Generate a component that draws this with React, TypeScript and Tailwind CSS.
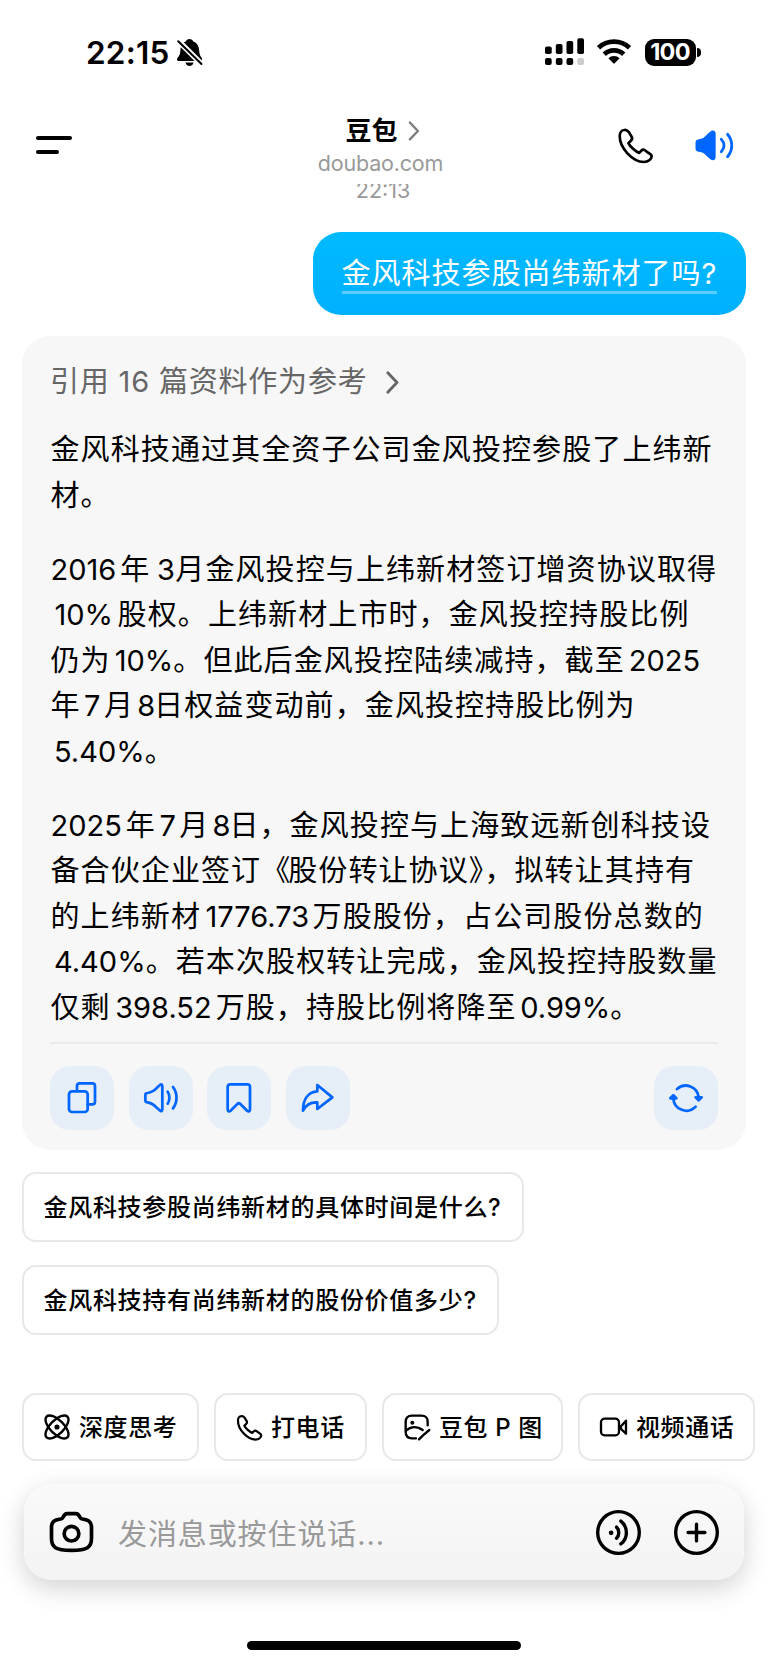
import React from "react";

interface IconProps {
    className?: string;
    strokeWidth?: number;
}

const BellOff = () => (
    <svg width="28" height="29" viewBox="1 1 28 29">
        <path d="M14.500 2c1.900 0 3.300.9 3.700 2.400c3.800 1.300 5.600 4.500 5.900 8.600c.3 4 .9 5.800 2.500 7.700c1 1.200.4 3.300-1.300 3.300H3.700c-1.700 0-2.200-1.900-1.200-3.100c2-2.200 2.600-3.800 2.900-7.900c.3-4.100 1.700-7.300 5.400-8.600C11.300 2.900 12.700 2 14.500 2z" fill="#000" />
        <path d="M10.500 25.500h8c-.4 2.200-1.900 3.600-4 3.600s-3.600-1.400-4-3.600z" fill="#000" />
        <path d="M3 3.500L27 27.500" stroke="#fff" strokeWidth="5.500" />
        <path d="M3.200 4.200L26.500 27" stroke="#000" strokeWidth="2" strokeLinecap="round" />
    </svg>
);

const Signal = () => (
    <svg width="40" height="28" viewBox="0 0 40 28">
        <rect x="0" y="8.500" width="6.700" height="7.500" rx="1.800" />
        <rect x="10.800" y="6" width="6.700" height="10" rx="1.800" />
        <rect x="21.500" y="3" width="6.700" height="13" rx="1.800" />
        <rect x="32.300" y="0.300" width="6.700" height="15.700" rx="1.800" />
        <rect x="0" y="20" width="6.700" height="7" rx="2" />
        <rect x="10.800" y="20" width="6.700" height="7" rx="2" />
        <rect x="21.500" y="20" width="6.700" height="7" rx="2" />
        <rect x="32.300" y="20" width="6.700" height="7" rx="2" fill="#ccc" />
    </svg>
);

const Wifi = () => (
    <svg width="36" height="28" viewBox="0 0 36 28" fill="none" stroke="#000" strokeWidth="4.800">
        <path d="M2.500 9.800A22.600 22.600 0 0 1 33.500 9.800" />
        <path d="M8.300 16.300A14 14 0 0 1 27.700 16.300" />
        <path d="M12.400 20.200A8 8 0 0 1 23.600 20.200L18.700 25.300Q18 26 17.300 25.300Z" fill="#000" stroke="none" />
    </svg>
);

const Phone = ({ className, strokeWidth }: IconProps) => (
    <svg className={className} viewBox="0 0 110 110" fill="none" stroke="currentColor" strokeWidth={strokeWidth} strokeLinejoin="round">
        <path d="M22 9C14 9 8 17 8 27C8 62 45 103 80 104C92 104 103 96 103 87C103 82 99 80 92 76L84 70C79 66 76 67 73 70L66 77C56 74 38 57 34 48L42 40C46 36 46 33 43 28L35 15C31 10 27 8 22 9Z" />
    </svg>
);

const SpeakerSolid = () => (
    <svg width="40" height="33" viewBox="0 0 120 100" fill="none" stroke="#0066ff" strokeWidth="8.500" strokeLinecap="round">
        <path d="M4 41C4 35 8 32 14 31C26 30 32 24 40 15L48 8C55 2 65 4 65 14V85C65 95 56 97 49 92L40 84C32 76 26 70 14 69C8 68 4 66 4 60Z" fill="#0066ff" stroke="none" />
        <path d="M82 31C93 42 93 58 82 69" />
        <path d="M101 16C118 36 118 65 101 84" />
    </svg>
);

const Chevron = ({ className }: IconProps) => (
    <svg className={className} viewBox="0 0 13 23" fill="none" stroke="currentColor" strokeWidth="2.800" strokeLinecap="round" strokeLinejoin="round">
        <path d="M1.800 1.800L11 11.500L1.800 21.200" />
    </svg>
);

interface ActionProps {
    children: React.ReactNode;
}

const Action = ({ children }: ActionProps) => (
    <button className="size-16 shrink-0 rounded-[20px] bg-[#e6eff8]">
        <svg width="64" height="64" viewBox="0 0 192 192" fill="none" stroke="#0066ff" strokeWidth="8.200" strokeLinecap="round" strokeLinejoin="round">
            {children}
        </svg>
    </button>
);

interface ChipProps {
    icon: React.ReactNode;
    label: string;
    className: string;
}

const Chip = ({ icon, label, className }: ChipProps) => (
    <button className={`flex h-[68px] shrink-0 items-center rounded-[14px] border-2 border-[#e8e8e8] text-[24px] font-medium tracking-[0.6px] whitespace-nowrap ${className}`}>
        {icon}
        <span className="pt-[2px]">{label}</span>
    </button>
);

// Número dentro del texto, con aire a los lados
const N = ({ children, className = "mx-[3.5px]" }: { children: string; className?: string }) => (
    <span className={`tracking-[0px] ${className}`}>{children}</span>
);

const parrafos: React.ReactNode[][] = [
    ["金风科技通过其全资子公司金风投控参股了上纬新", "材。"],
    [
        <><N className="mr-[4px]">2016</N>年<N className="mr-[0.5px] ml-[6.5px]">3</N>月金风投控与上纬新材签订增资协议取得</>,
        <><N className="mr-[4.5px] ml-[4px]">10%</N>股权。上纬新材上市时，金风投控持股比例</>,
        <>仍为<N className="ml-[4px]">10%</N>。但此后金风投控陆续减持，截至<N className="ml-[4px]">2025</N></>,
        <>年<N>7</N>月<N className="mr-[-1px] ml-[3px]">8</N>日权益变动前，金风投控持股比例为</>,
        <><N className="ml-[3.5px]">5.40%</N>。</>,
    ],
    [
        <><N className="mr-[4px]">2025</N>年<N>7</N>月<N className="mr-[-1px] ml-[3px]">8</N>日，金风投控与上海致远新创科技设</>,
        <>备合伙企业签订<span className="tracking-[-2px]">《</span>股份转让协议》，拟转让其持有</>,
        <>的上纬新材<N className="mr-[3.5px] ml-[4.5px] tracking-[0.3px]">1776.73</N>万股股份，占公司股份总数的</>,
        <><N className="ml-[3.5px]">4.40%</N>。若本次股权转让完成，金风投控持股数量</>,
        <>仅剩<N className="mr-[4px] ml-[4.5px] tracking-[0.3px]">398.52</N>万股，持股比例将降至<N className="ml-[3.5px]">0.99%</N>。</>,
    ],
];

const sugerencias = ["金风科技参股尚纬新材的具体时间是什么?", "金风科技持有尚纬新材的股份价值多少?"];

const App: React.FC = () => {
    return (
        <div className="flex h-[1665px] w-[768px] flex-col overflow-hidden bg-white font-[Inter,'Noto_Sans_CJK_SC',sans-serif] text-black">
            {/* barra de estado */}
            <div className="flex h-[104px] items-center justify-between pr-[67px] pl-[86px]">
                <div className="flex items-center gap-[7px]">
                    <span className="pt-[2px] text-[31.5px] font-semibold tracking-[0.2px]">22:15</span>
                    <BellOff />
                </div>
                <div className="flex items-center">
                    <Signal />
                    <div className="ml-[11px]"><Wifi /></div>
                    <div className="ml-[13px] flex h-[27px] w-[51px] items-center justify-center rounded-[9px] bg-black text-[23.5px] font-bold tracking-[-0.7px] text-white">100</div>
                    <div className="ml-[1.5px] h-[9px] w-[4px] rounded-r-full bg-black"></div>
                </div>
            </div>

            {/* cabecera */}
            <header className="grid h-[80px] grid-cols-[240px_1fr_240px] items-center">
                <div className="flex flex-col gap-[10px] pt-[1px] pl-9">
                    <div className="h-1 w-9 rounded-full bg-black"></div>
                    <div className="h-1 w-[23px] rounded-full bg-black"></div>
                </div>
                <div className="flex h-full flex-col items-center pt-[9px]">
                    <div className="mr-[3px] flex items-center gap-[10px]">
                        <span className="text-[26px] leading-[36px] font-bold">豆包</span>
                        <Chevron className="h-[20px] w-[12px] text-[#808080]" />
                    </div>
                    <span className="mt-[1px] mr-[7px] text-[21.5px] leading-[26px] tracking-[-0.2px] text-[#999]">doubao.com</span>
                </div>
                <div className="flex items-center justify-end pt-[2px] pr-[34px]">
                    <Phone className="mr-[40px] size-[37px]" strokeWidth={8} />
                    <SpeakerSolid />
                </div>
            </header>

            <main className="flex flex-1 flex-col">
                <div className="flex h-[48px] items-start justify-center overflow-hidden">
                    <div className="h-[20px] overflow-hidden pr-[2px]">
                        <div className="-mt-[8px] text-[21.5px] leading-[28px] text-[#999]">22:13</div>
                    </div>
                </div>
                <div className="mr-[22px] flex h-[83px] w-[433px] justify-center self-end rounded-[28px] bg-linear-to-b from-[#00baff] to-[#00b0ff] pt-[17px]">
                    <div className="h-[45px] border-b-[3px] border-white/35 text-[29px] leading-[49px] tracking-[1px] whitespace-nowrap text-white">金风科技参股尚纬新材了吗?</div>
                </div>

                <section className="mx-[22px] mt-[21px] flex h-[814px] flex-col rounded-[28px] bg-[#f7f7f7] px-[28px] pt-[23px]">
                    <div className="flex h-[46px] items-center text-[29px] tracking-[0.8px] text-[#666]">
                        <span>引用 16 篇资料作为参考</span>
                        <Chevron className="ml-[18px] h-[23px] w-[13px]" />
                    </div>
                    <div className="mt-[22px] flex flex-col gap-[28.5px] pl-[0.5px] text-[29px] leading-[45.5px] tracking-[1.1px]">
                        {parrafos.map((lineas, i) => (
                            <div key={i}>
                                {lineas.map((linea, j) => <p key={j} className="h-[45.5px] whitespace-nowrap">{linea}</p>)}
                            </div>
                        ))}
                    </div>
                    <div className="mt-[12px] h-[2px] shrink-0 bg-[#ebebeb]"></div>
                    <div className="mt-[21.5px] flex gap-[14.7px]">
                        <Action>
                            <rect x="57" y="76" width="56" height="62" rx="9" />
                            <path d="M81 72V60a8 8 0 0 1 8-8h38a8 8 0 0 1 8 8v47a8 8 0 0 1-8 8h-14" />
                        </Action>
                        <Action>
                            <path d="M49 87C49 83 51 81 56 81C68 79 78 72 85 64L93 57C96 54 100 55 100 60V130C100 136 96 137 92 133L85 127C78 119 68 111 56 109C51 109 49 107 49 103Z" />
                            <path d="M116 77C123 87 123 103 116 113" />
                            <path d="M132 63C146 82 146 108 132 127" />
                        </Action>
                        <Action>
                            <path d="M70 55h51a8 8 0 0 1 8 8v67c0 6-4 8-8 5l-21-21c-3-3-6-3-9 0l-21 21c-4 3-8 1-8-5V63a8 8 0 0 1 8-8z" />
                        </Action>
                        <Action>
                            <path d="M94 57V76C66 78 51 100 51 134C60 115 74 108 94 109V129L139 94L94 57Z" />
                        </Action>
                        <div className="ml-auto">
                            <Action>
                                <path d="M69 69A39 39 0 0 1 134 94" />
                                <path d="M125 122A39 39 0 0 1 58 97" />
                                <path d="M125 94L134 103L143 94Z" fill="#0066ff" />
                                <path d="M49 97L58 88L67 97Z" fill="#0066ff" />
                            </Action>
                        </div>
                    </div>
                </section>

                <div className="mt-[22px] flex flex-col items-start gap-[23px] pl-[22px]">
                    {sugerencias.map((s) => (
                        <button key={s} className="h-[70px] rounded-[14px] border-2 border-[#e8e8e8] pt-[2px] pr-[20.5px] pl-[19.5px] text-[24px] font-medium tracking-[0.7px] whitespace-nowrap">{s}</button>
                    ))}
                </div>
            </main>

            <footer className="flex h-[272px] shrink-0 flex-col">
                <div className="flex gap-[15px] pl-[22px]">
                    <Chip
                        className="w-[177px] gap-[9px] pl-[20px]"
                        label="深度思考"
                        icon={
                            <svg width="26" height="26" viewBox="0 0 76 76" fill="none" stroke="#000" strokeWidth="7">
                                <ellipse cx="38" cy="38" rx="43" ry="20" transform="rotate(45 38 38)" />
                                <ellipse cx="38" cy="38" rx="43" ry="20" transform="rotate(-45 38 38)" />
                                <circle cx="38" cy="38" r="7.500" fill="#000" stroke="none" />
                            </svg>
                        }
                    />
                    <Chip className="w-[153px] gap-[8px] pl-[20px]" label="打电话" icon={<Phone className="size-[27px]" strokeWidth={9} />} />
                    <Chip
                        className="w-[181px] gap-[8px] pl-[20px]"
                        label="豆包 P 图"
                        icon={
                            <svg width="27" height="27" viewBox="0 0 81 81" fill="none" stroke="#000" strokeWidth="7" strokeLinecap="round" strokeLinejoin="round">
                                <path d="M36 73H24C10 73 5 67 5 54V24C5 10 11 5 24 5H52C66 5 71 10 71 24V34" />
                                <path d="M6 50C20 37 40 36 56 48" />
                                <circle cx="25" cy="26" r="6" fill="#000" stroke="none" />
                                <path d="M76 48L57 64L45 76" />
                            </svg>
                        }
                    />
                    <Chip
                        className="w-[177px] gap-[8px] pl-[19px]"
                        label="视频通话"
                        icon={
                            <svg width="29" height="22" viewBox="0 0 87 66" fill="none" stroke="#000" strokeWidth="7" strokeLinejoin="round">
                                <rect x="6" y="8" width="54" height="50" rx="11" />
                                <path d="M66 31L81 14V53L66 39Z" />
                            </svg>
                        }
                    />
                </div>
                <div className="mx-6 mt-[23px] flex h-[96px] items-center rounded-[28px] bg-linear-to-b from-[#fafafa] to-[#f3f3f3] pr-[24px] pl-[24px] shadow-[0_8px_26px_rgba(0,0,0,0.18)]">
                    <svg width="47" height="44" viewBox="0 0 140 132" fill="none" stroke="#000" strokeWidth="11">
                        <path d="M57 11H83C93 11 92 20 98 25C104 30 130 24 130 52V85C130 112 118 121 70 121C22 121 10 112 10 85V52C10 24 36 30 42 25C48 20 47 11 57 11Z" />
                        <circle cx="70" cy="71" r="22" />
                    </svg>
                    <span className="ml-[23px] pt-[6px] text-[29px] tracking-[0.9px] text-[#999]">发消息或按住说话...</span>
                    <svg className="ml-auto" width="47" height="47" viewBox="0 0 140 140" fill="none" stroke="#000" strokeWidth="10" strokeLinecap="round">
                        <circle cx="70" cy="70" r="62" />
                        <circle cx="48" cy="71" r="7" fill="#000" stroke="none" />
                        <path d="M64 54C73 62 73 79 64 87" />
                        <path d="M77 36C99 54 99 87 77 104" />
                    </svg>
                    <svg className="ml-[31px]" width="47" height="47" viewBox="0 0 140 140" fill="none" stroke="#000" strokeWidth="10" strokeLinecap="round">
                        <circle cx="70" cy="70" r="62" />
                        <path d="M45 70H95M70 45V95" />
                    </svg>
                </div>
                <div className="mt-[61px] h-[9px] w-[274px] self-center rounded-full bg-black"></div>
            </footer>
        </div>
    );
};

export default App;
